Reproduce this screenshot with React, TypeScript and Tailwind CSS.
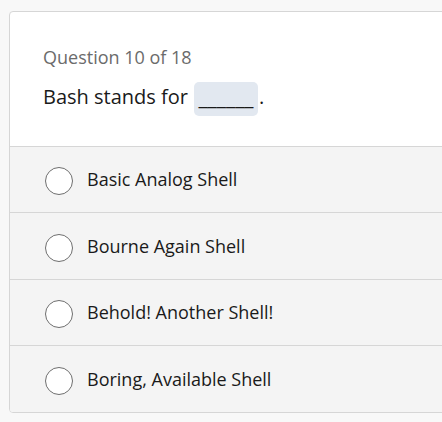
import React from "react";

const options = [
  { label: "Basic Analog Shell", h: "h-[66px]" },
  { label: "Bourne Again Shell", h: "h-[67px]" },
  { label: "Behold! Another Shell!", h: "h-[66px]" },
  { label: "Boring, Available Shell", h: "h-[67px]" },
];

export default function App() {
  return (
    <div
      className="w-[442px] h-[422px] overflow-hidden bg-[#f8f8f8] pl-[9px] pt-[11px]"
      style={{ fontFamily: '"Open Sans", "Noto Sans", sans-serif' }}
    >
      <div className="w-[460px] rounded-[4px] border border-[#d6d6d6] bg-white overflow-hidden">
        <div className="h-[134px] px-[33px] pt-[33px]">
          <div className="text-[18px] leading-[24px] text-[#6b6b6b]">Question 10 of 18</div>
          <div className="mt-[13px] flex items-start text-[20px] text-[#1a1a1a]">
            <span className="mt-[1px] leading-[28px]">Bash stands for</span>
            <span className="ml-[6px] flex h-[34px] w-[64px] items-start justify-center overflow-hidden rounded-[5px] bg-[#e2e8f0] pt-[1px] text-[21px] leading-[28px]">
              ______
            </span>
            <span className="mt-[1px] ml-[1px] leading-[28px]">.</span>
          </div>
        </div>
        {options.map((o) => (
          <div
            key={o.label}
            className={`flex ${o.h} items-center border-t border-[#d6d6d6] bg-[#f4f4f4] pl-[35px]`}
          >
            <div className="mt-[3px] h-[28px] w-[28px] shrink-0 rounded-full border border-[#6e6e6e] bg-white" />
            <span className="ml-[14px] text-[18px] text-[#1a1a1a]">{o.label}</span>
          </div>
        ))}
      </div>
    </div>
  );
}
